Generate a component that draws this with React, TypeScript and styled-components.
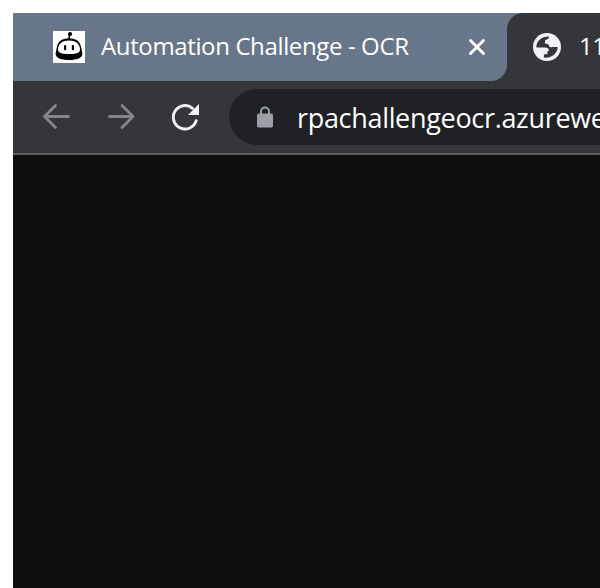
import React from 'react';
import styled, { createGlobalStyle } from 'styled-components';

const GlobalStyle = createGlobalStyle`
  * { box-sizing: border-box; }
  html, body { margin: 0; background: #fff; overflow: hidden; }
  svg { display: block; flex: none; }
`;

const Page = styled.div`
  width: 600px;
  height: 588px;
  padding: 13px 0 0 13px;
  overflow: hidden;
  font-family: 'Open Sans', 'Noto Sans', sans-serif;
`;

const BrowserWindow = styled.div`
  height: 575px;
  display: flex;
  flex-direction: column;
  overflow: hidden;
  background: #0e0e0e;
`;

const TabStrip = styled.div`
  height: 68px;
  flex: none;
  display: flex;
  background: #35363a;
`;

const InactiveTab = styled.div`
  width: 494px;
  flex: none;
  display: flex;
  align-items: center;
  padding: 0 21px 0 40px;
  background: #687689;
  border-radius: 0 0 16px 0;
`;

const ActiveTab = styled.div`
  flex: 1;
  min-width: 0;
  display: flex;
  align-items: center;
  gap: 18px;
  padding-left: 26px;
  overflow: hidden;
  background: radial-gradient(circle at 100% 100%, #35363a 15.5px, #687689 16.3px) 0 0 / 16px 16px no-repeat #35363a;
`;

const Favicon = styled.div`
  width: 32px;
  height: 32px;
  background: #fff;
`;

const TabTitle = styled.span`
  font-size: 24px;
  line-height: 34px;
  letter-spacing: -0.37px;
  padding-bottom: 2px;
  white-space: nowrap;
  color: #fff;
`;

const InactiveTitle = styled(TabTitle)`
  flex: 1;
  margin-left: 16px;
`;

const Toolbar = styled.div`
  height: 74px;
  flex: none;
  display: flex;
  align-items: center;
  padding: 0 0 0 28px;
  background: #35363a;
  border-bottom: 2px solid #5d5e61;
`;

const NavButton = styled.div<{ $color: string }>`
  width: 32px;
  height: 34px;
  padding-bottom: 2px;
  margin-right: 32px;
  flex: none;
  color: ${p => p.$color};
`;

const ReloadButton = styled(NavButton)`
  margin-right: 28px;
`;

const AddressBar = styled.div`
  width: 500px;
  height: 56px;
  flex: none;
  display: flex;
  align-items: center;
  gap: 24px;
  padding-left: 28px;
  border-radius: 28px;
  background: #202124;
`;

const Address = styled.span`
  padding-top: 1px;
  font-size: 27px;
  line-height: 36px;
  letter-spacing: -0.32px;
  white-space: nowrap;
  color: #fff;
`;

const RobotIcon = () => (
  <svg width="32" height="32" viewBox="0 0 32 32">
    <path d="M15.700 9l1-6" stroke="#000" strokeWidth="1.500" />
    <circle cx="17" cy="3" r="2.100" fill="#000" />
    <path d="M16 7.300C8.500 7.300 4.600 11 3.700 17L2.600 22.500C2.500 27 8 29 16 29S29.500 27 29.400 22.500L28.300 17C27.400 11 23.500 7.300 16 7.300z" fill="#000" />
    <path d="M16 9.600C9.300 9.600 5.300 12.500 5 18.300 4.900 22 8 23 16 23S27.100 22 27 18.300C26.700 12.500 22.700 9.600 16 9.600z" fill="#fff" />
    <rect x="11" y="14" width="2.200" height="5.200" rx="1" fill="#000" />
    <rect x="18.800" y="14" width="2.200" height="5.200" rx="1" fill="#000" />
  </svg>
);

const CloseIcon = () => (
  <svg width="18" height="18" viewBox="0 0 18 18">
    <path d="M2.500 2.500l13 13M15.500 2.500l-13 13" stroke="#fff" strokeWidth="2.900" strokeLinecap="round" />
  </svg>
);

const GlobeIcon = () => (
  <svg width="28" height="28" viewBox="0 0 28 28">
    <circle cx="14" cy="14" r="14" fill="#f1f2f5" />
    <path
      d="M3.400 13.500C3.500 7.800 8.500 3.300 15.800 3.400V5.300L12 7.500V10.700C15.500 10.800 15.700 11 16.200 13.700Q17.500 14.500 19.500 14H24.700C24.800 20 18.500 25.800 10.900 24.600V21.200H14.400V18.300L16 17.800C15.600 15.800 14.500 14.600 12.500 14.600H3.400z"
      fill="#35363a"
    />
  </svg>
);

const ArrowIcon = ({ forward = false }: { forward?: boolean }) => (
  <svg width="32" height="32" viewBox="0 0 32 32">
    <path
      d={forward ? 'M4.500 16.500H28M17 5.500L28 16.500L17 27.500' : 'M27.500 16.500H3.500M14.500 5.500L3.500 16.500L14.500 27.500'}
      fill="none"
      stroke="currentColor"
      strokeWidth="2.800"
      strokeLinecap="round"
      strokeLinejoin="round"
    />
  </svg>
);

const ReloadIcon = () => (
  <svg width="32" height="32" viewBox="0 0 32 32">
    <path d="M23.500 8.300A11.700 11.700 0 1 0 27.200 20.700" fill="none" stroke="currentColor" strokeWidth="2.900" strokeLinecap="round" />
    <path d="M30 4V15H19z" fill="currentColor" />
  </svg>
);

const LockIcon = () => (
  <svg width="16" height="22" viewBox="0 0 16 22">
    <path d="M4 9V5.500a4 4 0 0 1 8 0V9" fill="none" stroke="#9aa0a6" strokeWidth="2" />
    <rect y="7.500" width="16" height="14" rx="1.800" fill="#9aa0a6" />
  </svg>
);

export default function App() {
  return (
    <Page>
      <GlobalStyle />
      <BrowserWindow>
        <TabStrip>
          <InactiveTab>
            <Favicon><RobotIcon /></Favicon>
            <InactiveTitle>Automation Challenge - OCR</InactiveTitle>
            <CloseIcon />
          </InactiveTab>
          <ActiveTab>
            <GlobeIcon />
            <TabTitle>11</TabTitle>
          </ActiveTab>
        </TabStrip>
        <Toolbar>
          <NavButton $color="#85868a"><ArrowIcon /></NavButton>
          <NavButton $color="#85868a"><ArrowIcon forward /></NavButton>
          <ReloadButton $color="#f1f2f4"><ReloadIcon /></ReloadButton>
          <AddressBar>
            <LockIcon />
            <Address>rpachallengeocr.azurewe</Address>
          </AddressBar>
        </Toolbar>
      </BrowserWindow>
    </Page>
  );
}
